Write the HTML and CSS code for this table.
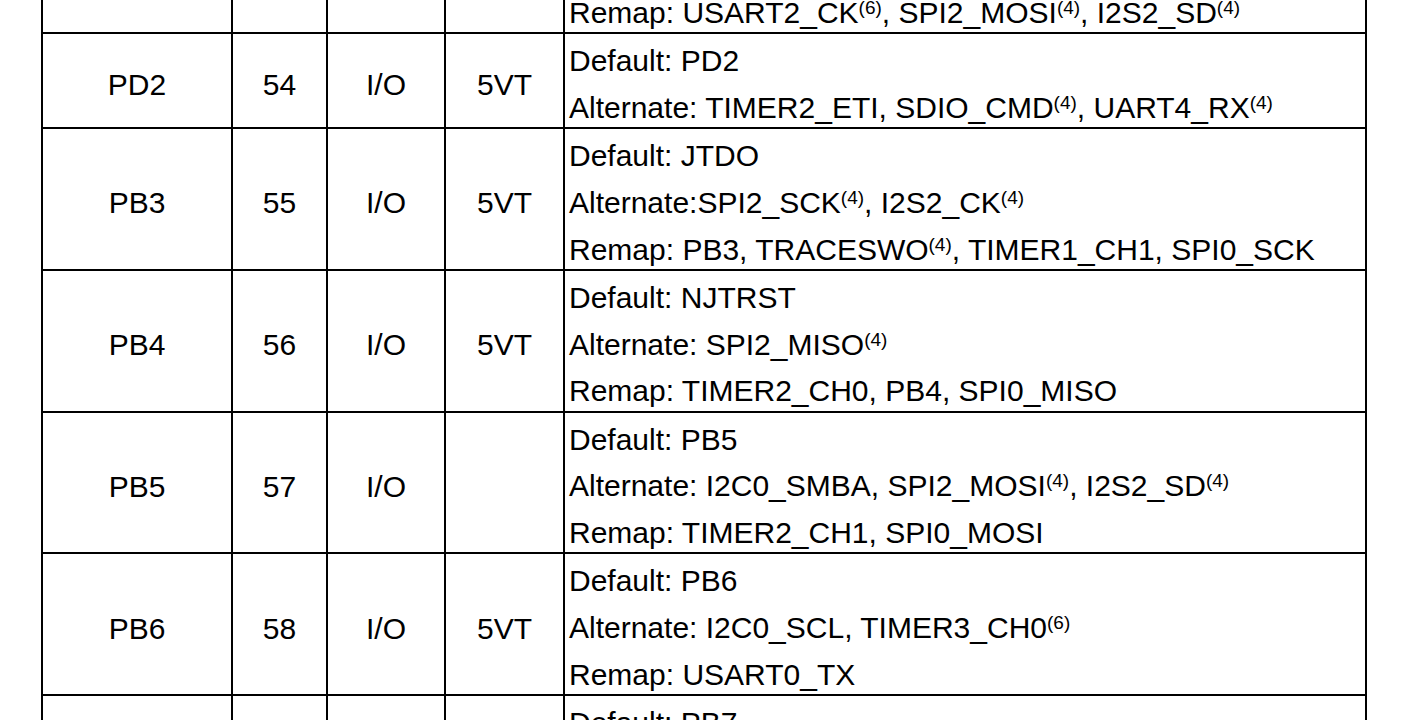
FILE: index.html
```html
<!DOCTYPE html>
<html lang="en">
<head>
<meta charset="utf-8">
<title>Pin definitions</title>
<link rel="stylesheet" href="styles.css">
</head>
<body>
<table class="pins">
  <colgroup>
    <col class="c-name"><col class="c-num"><col class="c-type"><col class="c-lvl"><col class="c-desc">
  </colgroup>
  <tbody>
    <tr class="row-top">
      <td class="mid"></td><td class="mid"></td><td class="mid"></td><td class="mid"></td>
      <td class="desc"><div class="ln">Remap: USART2_CK<sup>(6)</sup>, SPI2_MOSI<sup>(4)</sup>, I2S2_SD<sup>(4)</sup></div></td>
    </tr>
    <tr>
      <td class="mid">PD2</td><td class="mid">54</td><td class="mid">I/O</td><td class="mid">5VT</td>
      <td class="desc">
        <div class="ln">Default: PD2</div>
        <div class="ln">Alternate: TIMER2_ETI, SDIO_CMD<sup>(4)</sup>, UART4_RX<sup>(4)</sup></div>
      </td>
    </tr>
    <tr>
      <td class="mid">PB3</td><td class="mid">55</td><td class="mid">I/O</td><td class="mid">5VT</td>
      <td class="desc">
        <div class="ln">Default: JTDO</div>
        <div class="ln">Alternate:SPI2_SCK<sup>(4)</sup>, I2S2_CK<sup>(4)</sup></div>
        <div class="ln">Remap: PB3, TRACESWO<sup>(4)</sup>, TIMER1_CH1, SPI0_SCK</div>
      </td>
    </tr>
    <tr>
      <td class="mid">PB4</td><td class="mid">56</td><td class="mid">I/O</td><td class="mid">5VT</td>
      <td class="desc">
        <div class="ln">Default: NJTRST</div>
        <div class="ln">Alternate: SPI2_MISO<sup>(4)</sup></div>
        <div class="ln">Remap: TIMER2_CH0, PB4, SPI0_MISO</div>
      </td>
    </tr>
    <tr>
      <td class="mid">PB5</td><td class="mid">57</td><td class="mid">I/O</td><td class="mid"></td>
      <td class="desc">
        <div class="ln">Default: PB5</div>
        <div class="ln">Alternate: I2C0_SMBA, SPI2_MOSI<sup>(4)</sup>, I2S2_SD<sup>(4)</sup></div>
        <div class="ln">Remap: TIMER2_CH1, SPI0_MOSI</div>
      </td>
    </tr>
    <tr>
      <td class="mid">PB6</td><td class="mid">58</td><td class="mid">I/O</td><td class="mid">5VT</td>
      <td class="desc">
        <div class="ln">Default: PB6</div>
        <div class="ln">Alternate: I2C0_SCL, TIMER3_CH0<sup>(6)</sup></div>
        <div class="ln">Remap: USART0_TX</div>
      </td>
    </tr>
    <tr>
      <td class="mid">PB7</td><td class="mid">59</td><td class="mid">I/O</td><td class="mid">5VT</td>
      <td class="desc">
        <div class="ln">Default: PB7</div>
        <div class="ln">Alternate: I2C0_SDA , TIMER3_CH1<sup>(6)</sup></div>
        <div class="ln">Remap: USART0_RX</div>
      </td>
    </tr>
  </tbody>
</table>
</body>
</html>
```

FILE: styles.css
```css
html, body {
  margin: 0;
  padding: 0;
  background: #ffffff;
  overflow: hidden;
}

body {
  height: 720px;
  font-family: "Liberation Sans", Arial, sans-serif;
  font-size: 30px;
  color: #000000;
}

.pins {
  border-collapse: collapse;
  table-layout: fixed;
  width: 1324px;
  margin: -8px 0 0 41px;
}

.c-name { width: 190px; }
.c-num { width: 95px; }
.c-type { width: 118px; }
.c-lvl { width: 119px; }
.c-desc { width: 802px; }

.pins td {
  border: 2px solid #000000;
  padding: 0;
}

.mid {
  text-align: center;
  vertical-align: middle;
  line-height: 46px;
  padding-top: 9px !important;
}

.desc {
  vertical-align: top;
  text-align: left;
  padding: 4px 0 0 4px !important;
}

.ln {
  line-height: 46.75px;
  white-space: nowrap;
}

.ln:last-child {
  margin-bottom: -4.5px;
}

.row-top .desc {
  padding: 0 0 0 4px !important;
}

.row-top .ln {
  line-height: 38px;
  margin-bottom: 0;
}

.row-top .mid {
  padding-top: 0 !important;
}

sup {
  font-size: 19px;
  vertical-align: 9px;
  line-height: 0;
}
```
